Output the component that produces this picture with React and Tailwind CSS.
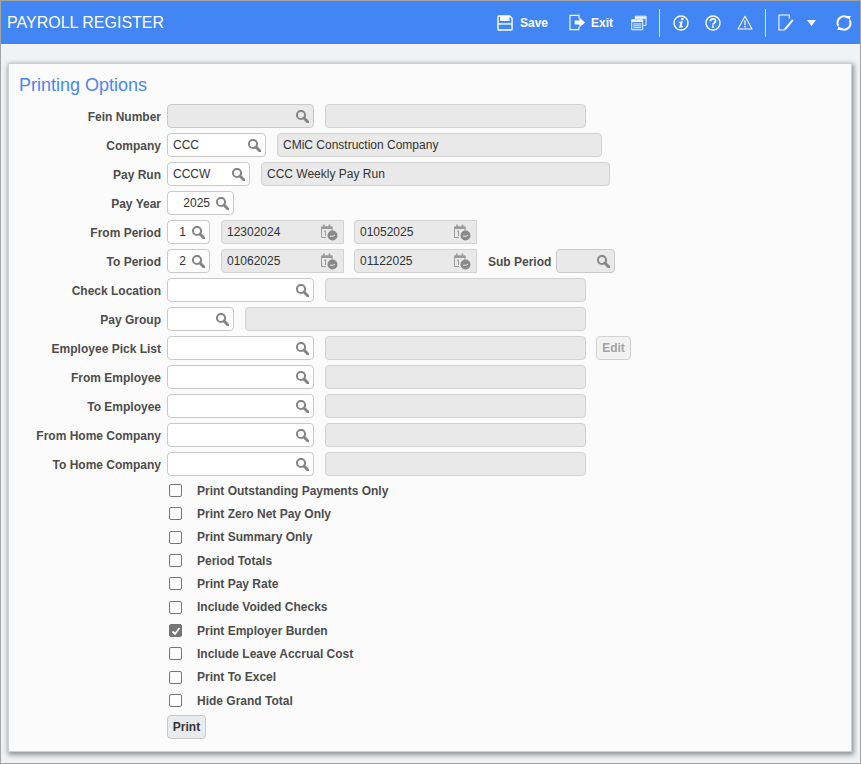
import React from 'react';

const SearchIcon = () => (
  <svg width="13" height="13" viewBox="0 0 13 13" fill="none" className="shrink-0">
    <circle cx="5" cy="5" r="4.1" stroke="#858585" strokeWidth="2" />
    <path d="M8 8 L11.9 12" stroke="#858585" strokeWidth="3" strokeLinecap="round" />
  </svg>
);

const CalendarIcon = () => (
  <svg width="17" height="17" viewBox="0 0 17 17" fill="none" className="shrink-0">
    <path d="M0.5 3 H11 V7 M5 13.5 H0.5 V3" stroke="#9a9a9a" strokeWidth="1" />
    <path d="M0.5 2.5 H11.5 V5 H0.5 Z" fill="#9a9a9a" />
    <path d="M3 0.5 V3 M8.5 0.5 V3" stroke="#9a9a9a" strokeWidth="1.6" />
    <path d="M3 7.5 L4.5 6.8 V12" stroke="#9a9a9a" strokeWidth="1" />
    <circle cx="11.5" cy="11.5" r="5" fill="#8a8a8a" />
    <path d="M9 12.2 H12.2 L14 11" stroke="#e8e8e8" strokeWidth="1" />
  </svg>
);

const Lookup = ({ width, value, disabled, alignRight }) => (
  <div
    className={`flex items-center h-6 rounded border border-[#c9c9c9] pr-[4px] shrink-0 ${disabled ? 'bg-[#e9e9e9]' : 'bg-white'}`}
    style={{ width }}
  >
    <span className={`flex-1 min-w-0 text-xs text-[#333] ${alignRight ? 'text-right pr-[6px]' : 'pl-[5px]'}`}>{value}</span>
    <SearchIcon />
  </div>
);

const Desc = ({ width, value, ml = 'ml-[11px]' }) => (
  <div
    className={`flex items-center h-6 rounded border border-[#d2d2d2] bg-[#e9e9e9] pl-[5px] text-xs text-[#333] shrink-0 ${ml}`}
    style={{ width }}
  >
    {value}
  </div>
);

const DateBox = ({ value, ml }) => (
  <div className={`flex items-center justify-between w-[123px] h-6 rounded-l border border-[#d2d2d2] bg-[#e9e9e9] pl-[5px] pr-[5px] text-xs text-[#333] shrink-0 ${ml}`}>
    {value}
    <CalendarIcon />
  </div>
);

const Row = ({ label, children }) => (
  <div className="flex items-center h-6 mb-[5px]">
    <label className="w-[152px] shrink-0 mr-[6px] pt-[2px] text-right text-xs font-bold text-[#4d4d4d]">{label}</label>
    {children}
  </div>
);

const checks = [
  ['Print Outstanding Payments Only', false],
  ['Print Zero Net Pay Only', false],
  ['Print Summary Only', false],
  ['Period Totals', false],
  ['Print Pay Rate', false],
  ['Include Voided Checks', false],
  ['Print Employer Burden', true],
  ['Include Leave Accrual Cost', false],
  ['Print To Excel', false],
  ['Hide Grand Total', false],
];

const App = () => {
  return (
    <div className="w-[861px] h-[764px] overflow-hidden bg-[#f1f2f4] border border-[#a3a3a3] font-['Liberation_Sans',Arial,sans-serif]">
      {/* header bar */}
      <div className="flex items-center h-[43px] bg-[#4285f4] text-white">
        <div className="pl-[6px] text-base leading-none">PAYROLL REGISTER</div>
        <div className="ml-auto flex items-center pr-[8px]">
          <svg width="16" height="16" viewBox="0 0 17 17" fill="none" stroke="#fff" strokeWidth="1.5">
            <path d="M1 2.2 Q1 1 2.2 1 H13.5 L16 3.5 V14.8 Q16 16 14.8 16 H2.2 Q1 16 1 14.8 Z" />
            <path d="M4 1 V5.5 H12.5 V1" fill="#fff" />
            <path d="M1 9.5 H16" />
          </svg>
          <span className="ml-[7px] text-xs font-bold">Save</span>
          <svg className="ml-[21px]" width="17" height="17" viewBox="0 0 18 17" fill="none">
            <path d="M10.5 4 V1 H1 V16 H10.5 V13" stroke="#fff" strokeWidth="1.2" />
            <path d="M6 6.5 H11 V3.2 L17 8.5 L11 13.8 V10.5 H6 Z" fill="#fff" />
          </svg>
          <span className="ml-[5px] text-xs font-bold">Exit</span>
          <svg className="ml-[18px]" width="16" height="16" viewBox="0 0 17 16" fill="none" stroke="#fff" strokeWidth="1">
            <path d="M4.5 3.5 V0.8 H16 V10.5 H13" />
            <path d="M4.5 2.5 H16" strokeWidth="2" />
            <path d="M0.8 4.5 H12.5 V15.2 H0.8 Z" fill="#4285f4" />
            <path d="M0.8 6 H12.5" strokeWidth="2" />
            <path d="M2.5 9 H11 M2.5 11 H11 M2.5 13 H11" />
          </svg>
          <div className="ml-[12px] w-px h-7 bg-[#d5e3fc]" />
          <svg className="ml-[13px]" width="16" height="16" viewBox="0 0 18 18" fill="none">
            <circle cx="9" cy="9" r="7.9" stroke="#fff" strokeWidth="1.6" />
            <path d="M9.2 3.4 h2.6 v2.5 h-2.6 Z" fill="#fff" />
            <path d="M6.8 7.6 L11 7 L9.6 12.4 L11.4 12 L11 13.8 L6.8 14.4 L8.2 9 L6.6 9.1 Z" fill="#fff" />
          </svg>
          <svg className="ml-[16px]" width="16" height="16" viewBox="0 0 18 18" fill="none">
            <circle cx="9" cy="9" r="7.9" stroke="#fff" strokeWidth="1.6" />
            <path d="M6.1 7 Q6.2 4.4 9 4.4 Q11.9 4.4 11.9 6.8 Q11.9 8.1 10.4 8.9 Q9 9.7 9 11" stroke="#fff" strokeWidth="2" />
            <rect x="7.8" y="12" width="2.4" height="2.2" fill="#fff" />
          </svg>
          <svg className="ml-[16px]" width="16" height="15" viewBox="0 0 18 17" fill="none">
            <path d="M9 1.5 L17 15.8 H1 Z" stroke="#fff" strokeWidth="1.2" strokeLinejoin="round" />
            <path d="M9 6 V11.5" stroke="#fff" strokeWidth="1.4" />
            <rect x="8.2" y="12.5" width="1.6" height="1.6" fill="#fff" />
          </svg>
          <div className="ml-[12px] w-px h-7 bg-[#d5e3fc]" />
          <svg className="ml-[12px]" width="16" height="17" viewBox="0 0 17 18" fill="none">
            <path d="M12 5 V1 H1 V17 H7" stroke="#fff" strokeWidth="1.1" />
            <path d="M7 15 L15 5.5 L16.6 7 L8.6 16.4 L6.4 17 Z" fill="#fff" />
          </svg>
          <svg className="ml-[13px]" width="9" height="6" viewBox="0 0 9 6">
            <path d="M0 0 H9 L4.5 6 Z" fill="#fff" />
          </svg>
          <svg className="ml-[20px]" width="16" height="16" viewBox="0 0 18 18" fill="none" stroke="#fff" strokeWidth="2.4">
            <path d="M13.5 3.2 A7.2 7.2 0 0 0 2.6 12.2" />
            <path d="M4.5 14.8 A7.2 7.2 0 0 0 15.4 5.8" />
            <path d="M11.5 1.2 L16.5 1.2 L15.2 5.6 Z" fill="#fff" stroke="none" />
            <path d="M6.5 16.8 L1.5 16.8 L2.8 12.4 Z" fill="#fff" stroke="none" />
          </svg>
        </div>
      </div>

      {/* form card */}
      <div className="mt-[19px] ml-[7px] w-[844px] h-[689px] bg-[#fbfbfb] border border-[#cfcfcf] shadow-[1px_2px_5px_1px_rgba(0,0,0,0.4)]">
        <h1 className="pl-[10px] pt-[9px] h-10 text-lg leading-[24px] text-[#4a86f5]">Printing Options</h1>

        <Row label="Fein Number">
          <Lookup width={147} disabled />
          <Desc width={261} />
        </Row>
        <Row label="Company">
          <Lookup width={99} value="CCC" />
          <Desc width={325} value="CMiC Construction Company" />
        </Row>
        <Row label="Pay Run">
          <Lookup width={83} value="CCCW" />
          <Desc width={349} value="CCC Weekly Pay Run" />
        </Row>
        <Row label="Pay Year">
          <Lookup width={67} value="2025" alignRight />
        </Row>
        <Row label="From Period">
          <Lookup width={43} value="1" alignRight />
          <DateBox value="12302024" ml="ml-[11px]" />
          <DateBox value="01052025" ml="ml-[10px]" />
        </Row>
        <Row label="To Period">
          <Lookup width={43} value="2" alignRight />
          <DateBox value="01062025" ml="ml-[11px]" />
          <DateBox value="01122025" ml="ml-[10px]" />
          <label className="ml-[11px] mr-[5px] pt-[2px] text-xs font-bold text-[#4d4d4d]">Sub Period</label>
          <Lookup width={59} disabled />
        </Row>
        <Row label="Check Location">
          <Lookup width={147} />
          <Desc width={261} />
        </Row>
        <Row label="Pay Group">
          <Lookup width={67} />
          <Desc width={341} />
        </Row>
        <Row label="Employee Pick List">
          <Lookup width={147} />
          <Desc width={261} />
          <button className="ml-[10px] w-[35px] h-6 rounded border border-[#d2d2d2] bg-[#f2f2f2] text-xs font-bold text-[#a3a3a3]">Edit</button>
        </Row>
        <Row label="From Employee">
          <Lookup width={147} />
          <Desc width={261} />
        </Row>
        <Row label="To Employee">
          <Lookup width={147} />
          <Desc width={261} />
        </Row>
        <Row label="From Home Company">
          <Lookup width={147} />
          <Desc width={261} />
        </Row>
        <Row label="To Home Company">
          <Lookup width={147} />
          <Desc width={261} />
        </Row>

        <div className="pl-[160px] -mt-[2px]">
          {checks.map(([label, checked]) => (
            <div key={label} className="flex items-center h-[23.33px]">
              <span className={`flex items-center justify-center w-[13px] h-[13px] rounded-[2px] border ${checked ? 'bg-[#757575] border-[#757575]' : 'bg-white border-[#767676]'}`}>
                {checked && (
                  <svg width="10" height="10" viewBox="0 0 10 10" fill="none">
                    <path d="M1.5 5.5 L4 8 L8.5 2" stroke="#fff" strokeWidth="1.8" />
                  </svg>
                )}
              </span>
              <span className="ml-[15px] text-xs font-bold text-[#4d4d4d]">{label}</span>
            </div>
          ))}
          <button className="-ml-[2px] mt-[3px] w-[39px] h-6 rounded border border-[#c9c9c9] bg-[#e9ecef] text-xs font-bold text-[#333]">Print</button>
        </div>
      </div>
    </div>
  );
};

export default App;
